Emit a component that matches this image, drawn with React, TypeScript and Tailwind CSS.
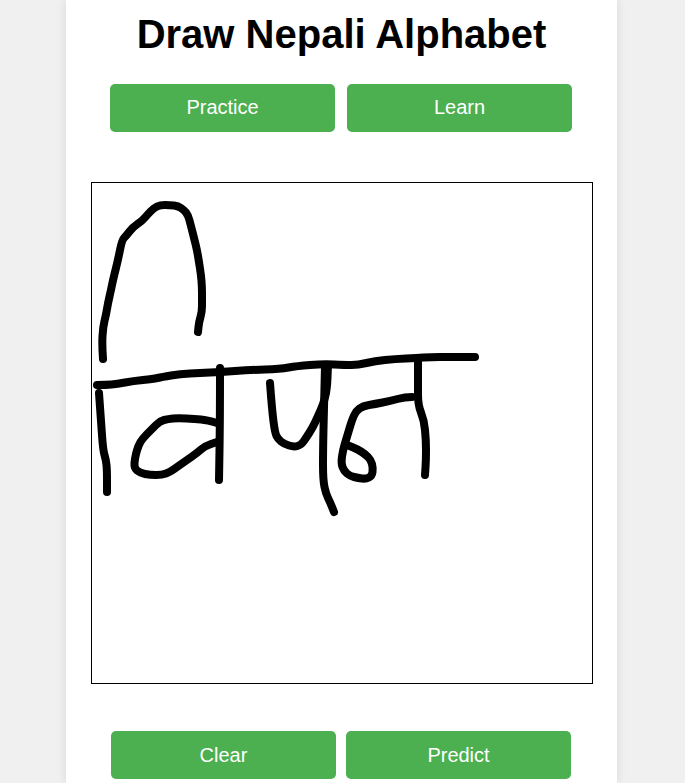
const strokes: number[][][] = [
  [[103,359],[102,345],[103,327],[106,315],[108,303],[111,290],[113,280],[118,260],[122,240],[126,236],[133,227],[142,221],[148,214],[154,208],[160,205],[170,205],[178,206],[184,210],[188,215],[191,226],[194,238],[197,250],[199,262],[201,275],[202,287],[202,300],[202,312],[199,322],[198,332]],
  [[97,385],[106,385],[117,384],[133,381],[153,379],[162,377],[180,374],[200,373],[220,372],[250,370],[280,369],[297,366],[323,364],[345,365],[358,365],[375,361],[395,359],[417,358],[430,357],[450,357],[475,357]],
  [[99,393],[101,420],[103,450],[106,460],[107,470],[107,492]],
  [[220,368],[220,420],[219,480]],
  [[217,423],[207,420],[195,419],[178,418],[168,419],[160,421],[152,429],[146,435],[140,442],[137,450],[135,458],[134,468],[140,473],[150,475],[162,475],[170,472],[177,467],[187,460],[197,453],[205,446],[217,442]],
  [[270,383],[272,410],[275,433],[278,439],[284,444],[294,447],[301,445],[306,438],[313,427],[318,416],[323,405],[327,390],[328,365]],
  [[325,366],[324,407],[323,450],[323,480],[326,494],[330,502],[334,512]],
  [[412,397],[405,397],[390,401],[375,404],[363,406],[356,411],[352,420],[349,430],[346,440],[343,450],[341,463],[344,471],[350,476],[358,478],[366,479],[372,476],[373,468],[371,460],[365,454],[357,449],[347,445]],
  [[418,358],[418,385],[418,405],[424,420],[426,440],[426,460],[425,475]],
];

function smooth(p: number[][]) {
  let d = `M${p[0][0]} ${p[0][1]}`;
  for (let i = 1; i < p.length - 1; i++) {
    const mx = (p[i][0] + p[i + 1][0]) / 2;
    const my = (p[i][1] + p[i + 1][1]) / 2;
    d += ` Q${p[i][0]} ${p[i][1]} ${mx} ${my}`;
  }
  const l = p[p.length - 1];
  return `${d} L${l[0]} ${l[1]}`;
}

const btn = "h-12 w-[225px] rounded-[5px] bg-[#4caf50] text-[20px] text-white";

export default function App() {
  return (
    <div className="h-[783px] overflow-hidden bg-[#f0f0f0] font-['Liberation_Sans',Arial,sans-serif]">
      <div className="ml-[66px] flex h-full w-[551px] flex-col bg-white shadow-[0_0_10px_rgba(0,0,0,0.1)]">
        <h1 className="mt-[12px] h-[44px] text-center text-[40px] leading-[44px] font-bold text-black">Draw Nepali Alphabet</h1>
        <div className="mt-[28px] ml-[44px] flex gap-3">
          <button className={`${btn} pb-[2px]`}>Practice</button>
          <button className={`${btn} pb-[2px]`}>Learn</button>
        </div>
        <div className="mt-[50px] ml-[25px] h-[502px] w-[502px] border border-black bg-white">
          <svg viewBox="92 183 500 500" className="block h-[500px] w-[500px]">
            {strokes.map((p, i) => (
              <path key={i} d={smooth(p)} fill="none" stroke="#000" strokeWidth={8} strokeLinecap="round" strokeLinejoin="round" />
            ))}
          </svg>
        </div>
        <div className="mt-[47px] ml-[45px] flex gap-2.5">
          <button className={btn}>Clear</button>
          <button className={btn}>Predict</button>
        </div>
      </div>
    </div>
  );
}
